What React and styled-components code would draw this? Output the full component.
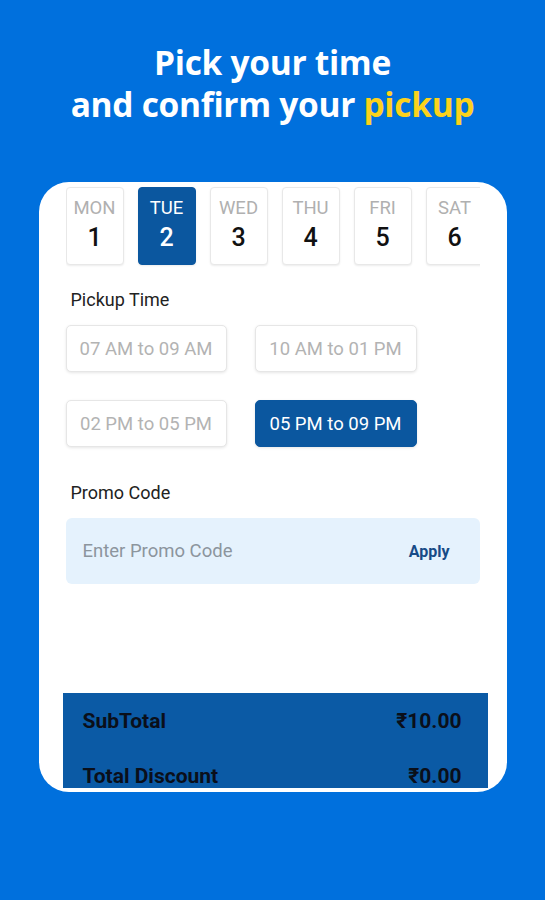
import React from "react";
import styled, { createGlobalStyle } from "styled-components";

const Global = createGlobalStyle`
  html, body { margin: 0; padding: 0; }
  body { background: #0070dd; font-family: Roboto, "Liberation Sans", sans-serif; }
  * { box-sizing: border-box; }
`;

const Page = styled.div`
  width: 545px;
  height: 900px;
  background: #0070dd;
  overflow: hidden;
  display: flex;
  flex-direction: column;
  align-items: center;
`;

const Heading = styled.h1`
  margin: 41px 0 0;
  height: 141px;
  font-family: "Open Sans", "Liberation Sans", sans-serif;
  font-weight: 700;
  font-size: 33.5px;
  line-height: 42px;
  letter-spacing: -0.3px;
  color: #ffffff;
  text-align: center;
  white-space: nowrap;
`;

const Accent = styled.span`
  color: #fcd21c;
`;

const Card = styled.div`
  width: 468px;
  height: 610px;
  background: #ffffff;
  border-radius: 30px;
  overflow: hidden;
  display: flex;
  flex-direction: column;
`;

const Content = styled.div`
  padding: 0 27px;
  display: flex;
  flex-direction: column;
`;

const DateStrip = styled.div`
  display: flex;
  gap: 14px;
  overflow: hidden;
  padding: 5px 0 3px;
`;

const DayCell = styled.div`
  flex: 0 0 58px;
  height: 78px;
  border-radius: 4px;
  border: 1px solid ${(p) => (p.$active ? "#0b579f" : "#e8e8e8")};
  background: ${(p) => (p.$active ? "#0b579f" : "#ffffff")};
  box-shadow: 0 1px 2px rgba(0, 0, 0, 0.08);
  display: flex;
  flex-direction: column;
  align-items: center;
  padding-top: 9px;
`;

const DayName = styled.div`
  font-size: 18.5px;
  line-height: 22px;
  color: ${(p) => (p.$active ? "#ffffff" : "#b0b0b0")};
`;

const DayNum = styled.div`
  margin-top: 4px;
  font-size: 25px;
  line-height: 29px;
  font-weight: 500;
  color: ${(p) => (p.$active ? "#ffffff" : "#111111")};
`;

const Label = styled.div`
  font-size: 18px;
  line-height: 22px;
  color: #222222;
  margin: ${(p) => p.$m};
  padding-left: 5px;
`;

const SlotGrid = styled.div`
  display: grid;
  grid-template-columns: 161px 162px;
  column-gap: 28px;
  row-gap: 28px;
`;

const Slot = styled.div`
  height: 47px;
  border-radius: 5px;
  border: 1px solid ${(p) => (p.$active ? "#0b579f" : "#e6e6e6")};
  background: ${(p) => (p.$active ? "#0b579f" : "#ffffff")};
  box-shadow: 0 1px 3px rgba(0, 0, 0, 0.1);
  display: flex;
  align-items: center;
  justify-content: center;
  font-size: 18.5px;
  color: ${(p) => (p.$active ? "#ffffff" : "#b3b3b3")};
`;

const PromoBox = styled.div`
  height: 66px;
  border-radius: 6px;
  background: #e5f2fd;
  display: flex;
  align-items: center;
  justify-content: space-between;
  padding: 0 30px 0 17px;
`;

const PromoPlaceholder = styled.div`
  font-size: 18.5px;
  color: #8c959d;
`;

const ApplyBtn = styled.div`
  font-size: 16px;
  font-weight: 700;
  color: #174b87;
`;

const Summary = styled.div`
  margin: 109px 19px 6px 24px;
  background: #0b5aa5;
  padding: 16px 26px 0 20px;
  display: flex;
  flex-direction: column;
  gap: 31px;
  flex: 1;
`;

const SumRow = styled.div`
  display: flex;
  justify-content: space-between;
  font-size: 21px;
  line-height: 24px;
  font-weight: 700;
  color: #0a0f1a;
`;

const days = [
  ["MON", "1"],
  ["TUE", "2"],
  ["WED", "3"],
  ["THU", "4"],
  ["FRI", "5"],
  ["SAT", "6"],
];

const slots = ["07 AM to 09 AM", "10 AM to 01 PM", "02 PM to 05 PM", "05 PM to 09 PM"];

export default function App() {
  return (
    <>
      <Global />
      <Page>
        <Heading>
          Pick your time
          <br />
          and confirm your <Accent>pickup</Accent>
        </Heading>
        <Card>
          <Content>
            <DateStrip>
              {days.map(([n, d]) => (
                <DayCell key={n} $active={n === "TUE"}>
                  <DayName $active={n === "TUE"}>{n}</DayName>
                  <DayNum $active={n === "TUE"}>{d}</DayNum>
                </DayCell>
              ))}
            </DateStrip>
            <Label $m="21px 0 14px">Pickup Time</Label>
            <SlotGrid>
              {slots.map((s, i) => (
                <Slot key={s} $active={i === 3}>
                  {s}
                </Slot>
              ))}
            </SlotGrid>
            <Label $m="35px 0 14px">Promo Code</Label>
            <PromoBox>
              <PromoPlaceholder>Enter Promo Code</PromoPlaceholder>
              <ApplyBtn>Apply</ApplyBtn>
            </PromoBox>
          </Content>
          <Summary>
            <SumRow>
              <span>SubTotal</span>
              <span>₹10.00</span>
            </SumRow>
            <SumRow>
              <span>Total Discount</span>
              <span>₹0.00</span>
            </SumRow>
          </Summary>
        </Card>
      </Page>
    </>
  );
}
